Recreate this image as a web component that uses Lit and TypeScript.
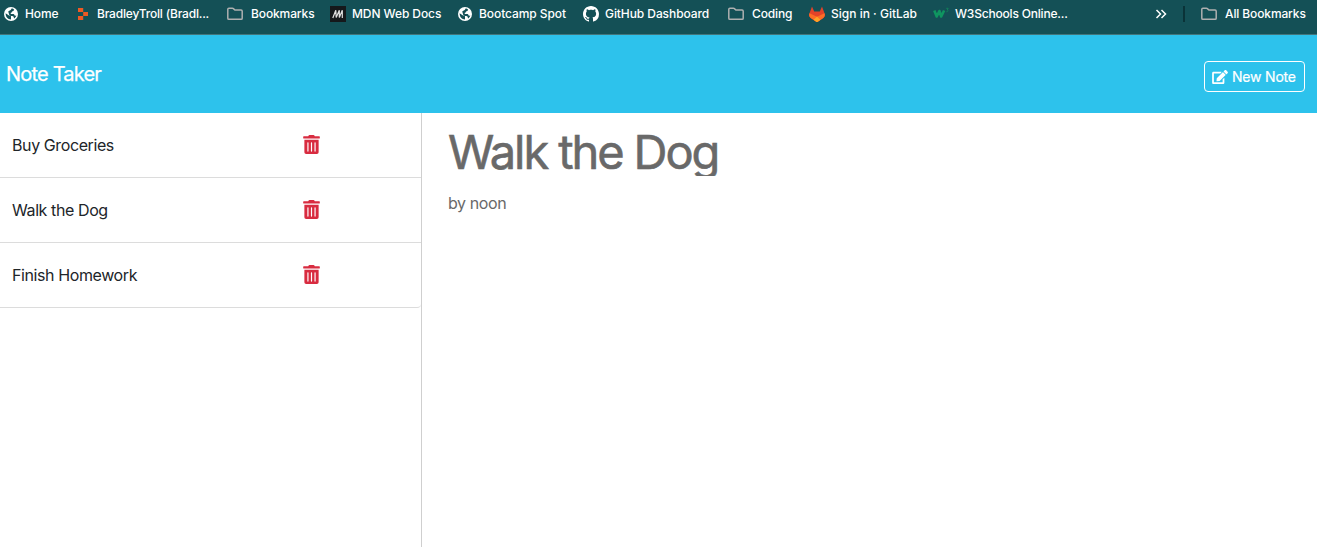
import { LitElement, html, svg, css } from "lit";
import { customElement } from "lit/decorators.js";

const globe = svg`<svg class="ic" viewBox="0 0 16 16"><circle cx="8" cy="8" r="7" fill="#fff"/><path d="M2.600 7.200 6 9.600c1 .2 1.800.2 2 1v2.800C5 13.400 2.500 11 2.600 7.200zM5.200 5.600C6 4.300 7.800 4.500 8.200 3.200L8.500 2.500c1.300 0 2 .5 2.600 1-.1 1.300-1.100 1.800-2.100 2-.2 1-.6 1.400-1.500 1.500L8 8h2.500c1 .3.900 1.500 1.700 1.700l1.100-.3c-.4 1.400-1.200 2.500-2.300 3.200-.2-1.500-.3-2.300-1.800-2.600-1.200-.2-2.300-.1-2.900-1.100z" fill="#145056"/></svg>`;
const folder = svg`<svg class="ic" viewBox="0 0 16 16"><path d="M.8 12.200V3.300c0-.7.400-1.100 1.100-1.100h3.500c.4 0 .7.100 1 .4l1.500 1.500h6.200c.7 0 1.100.4 1.100 1.100v7c0 .7-.4 1.100-1.100 1.100H1.900c-.7 0-1.100-.4-1.100-1.100z" fill="none" stroke="#aeb0b0" stroke-width="1.500"/></svg>`;
const replit = svg`<svg class="ic" viewBox="0 0 16 16"><path d="M3 2h5.200v4H3zM8.200 6H13v4H8.200zM3 10h5.200v4H3z" fill="#ee5a24"/></svg>`;
const mdn = svg`<svg class="ic" viewBox="0 0 16 16"><path d="M0 0h16v16H0z" fill="#15181b"/><path d="M2.800 12 5.800 4.200 6.200 11.500 9.300 4.200V11.500L12.300 4.200V12" fill="none" stroke="#e0e0e0" stroke-width="1.200"/></svg>`;
const github = svg`<svg class="ic" viewBox="0 0 16 16"><path fill="#fff" d="M8 0C3.580 0 0 3.580 0 8c0 3.540 2.290 6.530 5.470 7.590.4.070.55-.17.55-.38 0-.19-.01-.82-.01-1.490-2.010.37-2.530-.49-2.690-.94-.09-.23-.48-.94-.82-1.130-.28-.15-.68-.52-.01-.53.63-.01 1.080.58 1.230.82.72 1.210 1.870.87 2.330.66.07-.52.28-.87.51-1.070-1.780-.2-3.640-.89-3.640-3.950 0-.87.31-1.590.82-2.150-.08-.2-.36-1.020.08-2.120 0 0 .67-.21 2.200.82.64-.18 1.320-.27 2-.27s1.360.09 2 .27c1.530-1.040 2.200-.82 2.200-.82.44 1.100.16 1.920.08 2.120.51.56.82 1.270.82 2.150 0 3.070-1.870 3.750-3.650 3.950.29.25.54.73.54 1.480 0 1.070-.01 1.930-.01 2.200 0 .21.15.46.55.38A8.010 8.010 0 0 0 16 8c0-4.420-3.580-8-8-8z"/></svg>`;
const gitlab = svg`<svg class="ic" viewBox="0 0 16 16"><path d="M3 .5.400 7.500c-.8 2 0 3.500 1.300 4.500L8 16.300 14.300 12c1.300-1 2.100-2.500 1.300-4.500L13 .5 10.800 5.500H5.200z" fill="#e24329"/><path d="M.5 7.200 8 10.800l7.500-3.600c.7 2 .1 3.700-1.200 4.800L8 16.300 1.700 12C.4 10.900-.2 9.200.5 7.200z" fill="#fc6d26"/><path d="m8 10.500 3.300 3.300L8 16.300l-3.300-2.500z" fill="#fca326"/></svg>`;
const w3 = svg`<svg class="ic" viewBox="0 0 16 16"><path d="m1.300 4.500 2.400 6 2.700-5.500 1.800 5.500 2.900-6" fill="none" stroke="#0f9560" stroke-width="2.600" stroke-linejoin="round"/><path d="M13.200 2.300h2L14.300 4c1 0 1.100 1.900-.9 1.800" fill="none" stroke="#11895b" stroke-width=".8"/></svg>`;

const bookmarks = [
  { icon: globe, text: "Home", cls: "" },
  { icon: replit, text: "BradleyTroll (Bradl...", cls: "tight" },
  { icon: folder, text: "Bookmarks", cls: "folder" },
  { icon: mdn, text: "MDN Web Docs", cls: "" },
  { icon: globe, text: "Bootcamp Spot", cls: "" },
  { icon: github, text: "GitHub Dashboard", cls: "" },
  { icon: folder, text: "Coding", cls: "folder" },
  { icon: gitlab, text: "Sign in · GitLab", cls: "natural" },
  { icon: w3, text: "W3Schools Online...", cls: "tight" },
];

@customElement("bookmarks-bar")
class BookmarksBar extends LitElement {
  static styles = css`
    :host { display: grid; box-sizing: border-box; height: 35px; padding: 6px 0 0 3px; align-items: start;
      grid-template-columns: 72px 152px 103px 127px 126px 145px 81px 124px 221px 29px 1fr;
      background: #145056; border-bottom: 1px solid #43757b; color: #fff; font: 500 12px/16px Inter, sans-serif; letter-spacing: -.08px; }
    .item { display: flex; gap: 6px; white-space: nowrap; }
    .folder { gap: 8px; letter-spacing: -.12px; }
    .tight { letter-spacing: -.19px; }
    .natural { letter-spacing: 0; }
    .ic { width: 16px; height: 16px; flex: none; display: block; }
    .more { display: block; width: 12px; height: 16px; margin-left: 1px; }
    .last { display: flex; }
    .sep { width: 2px; height: 16px; background: #0a3338; margin-right: 16px; }
  `;
  render() {
    return html`${bookmarks.map((b) => html`<div class="item ${b.cls}">${b.icon}<span>${b.text}</span></div>`)}
      <svg class="more" viewBox="0 0 12 16"><path d="m1.500 4 4 4-4 4M6.500 4l4 4-4 4" fill="none" stroke="#fff" stroke-width="1.500"/></svg>
      <div class="last"><div class="sep"></div><div class="item folder">${folder}<span>All Bookmarks</span></div></div>`;
  }
}

const pencil = svg`<svg class="edit" viewBox="0 0 576 512"><path fill="currentColor" d="M402.600 83.200l90.200 90.200c3.800 3.800 3.800 10 0 13.800L274.400 405.600l-92.800 10.300c-12.400 1.400-22.900-9.100-21.500-21.500l10.300-92.800L388.800 83.200c3.800-3.800 10-3.800 13.800 0zm162-22.900l-48.800-48.800c-15.200-15.200-39.900-15.200-55.200 0l-35.400 35.400c-3.800 3.800-3.800 10 0 13.800l90.200 90.200c3.800 3.800 10 3.800 13.800 0l35.400-35.400c15.200-15.300 15.200-40 0-55.200zM384 346.200V448H64V128h229.800c3.200 0 6.200-1.300 8.500-3.500l40-40c7.600-7.600 2.200-20.500-8.500-20.500H48C21.500 64 0 85.500 0 112v352c0 26.500 21.500 48 48 48h352c26.500 0 48-21.500 48-48V306.200c0-10.700-12.900-16-20.500-8.500l-40 40c-2.200 2.300-3.500 5.300-3.500 8.500z"/></svg>`;
const trash = svg`<svg class="trash" viewBox="0 0 448 512"><path fill="currentColor" d="M32 464a48 48 0 0 0 48 48h288a48 48 0 0 0 48-48V128H32zm272-256a16 16 0 0 1 32 0v224a16 16 0 0 1-32 0zm-96 0a16 16 0 0 1 32 0v224a16 16 0 0 1-32 0zm-96 0a16 16 0 0 1 32 0v224a16 16 0 0 1-32 0zM432 32H312l-9.400-18.700A24 24 0 0 0 281.100 0H166.800a23.720 23.720 0 0 0-21.400 13.300L136 32H16A16 16 0 0 0 0 48v32a16 16 0 0 0 16 16h416a16 16 0 0 0 16-16V48a16 16 0 0 0-16-16z"/></svg>`;

@customElement("app-root")
class AppRoot extends LitElement {
  static styles = css`
    :host { display: flex; flex-direction: column; height: 100vh; overflow: hidden; background: #fff; color: #212529; font: 400 16px/24px Inter, sans-serif; }
    header { display: flex; justify-content: space-between; align-items: flex-start; box-sizing: border-box; height: 78px; padding: 26px 12px 0 6px; background: #2dc2ec; color: #fff; flex: none; }
    .brand { font-size: 20px; line-height: 26px; letter-spacing: -.8px; -webkit-text-stroke: .25px; }
    .new { display: flex; align-items: center; gap: 4px; box-sizing: border-box; width: 101px; height: 31px; padding: 0 0 0 7px; border: 1px solid #fff; border-radius: 4px; background: none; color: #fff; font: 400 14px/21px Inter, sans-serif; white-space: nowrap; letter-spacing: -.2px; -webkit-text-stroke: .2px; }
    .edit { width: 16px; height: 14px; flex: none; }
    main { display: flex; flex: 1; }
    .list { box-sizing: border-box; width: 422px; border-right: 1px solid #cfcfcf; }
    .row { display: grid; grid-template-columns: 291px auto; justify-content: start; box-sizing: border-box; height: 65px; padding: 20px 0 0 12px; border-bottom: 1px solid #dcdcdc; letter-spacing: -.4px; }
    .row:last-child { border-bottom-right-radius: 4px; }
    .trash { width: 17px; height: 19px; margin-top: 2px; color: #d82c40; }
    .note { padding: 18px 0 0 26px; color: #696969; }
    h1 { margin: 0; height: 45px; overflow: hidden; font-size: 47px; line-height: 42px; font-weight: 400; letter-spacing: -2.100px; white-space: nowrap; -webkit-text-stroke: .6px; }
    p { margin: 15px 0 0; letter-spacing: -.4px; }
  `;
  render() {
    return html`<bookmarks-bar></bookmarks-bar>
      <header><div class="brand">Note Taker</div><button class="new">${pencil}<span>New Note</span></button></header>
      <main>
        <div class="list">${["Buy Groceries", "Walk the Dog", "Finish Homework"].map((t) => html`<div class="row"><span>${t}</span>${trash}</div>`)}</div>
        <div class="note"><h1>Walk the Dog</h1><p>by noon</p></div>
      </main>`;
  }
}
